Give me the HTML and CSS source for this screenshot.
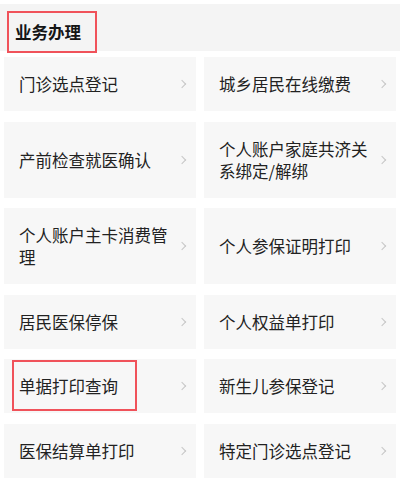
FILE: index.html
```html
<!DOCTYPE html>
<html lang="zh-CN">
<head>
<meta charset="utf-8">
<link rel="stylesheet" href="styles.css">
</head>
<body>
<div class="page">
  <div class="section-head">
    <span class="section-title">业务办理</span>
    <span class="mark mark-head"></span>
  </div>
  <div class="grid">
    <div class="card"><span class="label">门诊选点登记</span><span class="chev"></span></div>
    <div class="card"><span class="label">城乡居民在线缴费</span><span class="chev"></span></div>
    <div class="card"><span class="label">产前检查就医确认</span><span class="chev"></span></div>
    <div class="card"><span class="label">个人账户家庭共济关系绑定/解绑</span><span class="chev"></span></div>
    <div class="card"><span class="label">个人账户主卡消费管理</span><span class="chev"></span></div>
    <div class="card"><span class="label">个人参保证明打印</span><span class="chev"></span></div>
    <div class="card"><span class="label">居民医保停保</span><span class="chev"></span></div>
    <div class="card"><span class="label">个人权益单打印</span><span class="chev"></span></div>
    <div class="card card-marked"><span class="label">单据打印查询</span><span class="chev"></span><span class="mark mark-card"></span></div>
    <div class="card"><span class="label">新生儿参保登记</span><span class="chev"></span></div>
    <div class="card"><span class="label">医保结算单打印</span><span class="chev"></span></div>
    <div class="card"><span class="label">特定门诊选点登记</span><span class="chev"></span></div>
  </div>
</div>
</body>
</html>
```

FILE: styles.css
```css
* { box-sizing: border-box; }
html, body {
  margin: 0;
  padding: 0;
  background: #ffffff;
}
body {
  font-family: "Noto Sans CJK SC", "Noto Sans", sans-serif;
  color: #1f1f1f;
  overflow: hidden;
}
.page {
  width: 400px;
  height: 483px;
  padding-top: 4px;
}
.section-head {
  position: relative;
  height: 47px;
  background: #f4f4f4;
  display: flex;
  align-items: center;
  padding-left: 15px;
}
.section-title {
  font-size: 16.5px;
  font-weight: 700;
  line-height: 22px;
  margin-top: 9px;
  color: #151515;
}
.mark {
  position: absolute;
  border: 2px solid #f0525a;
  pointer-events: none;
}
.mark-head {
  left: 7px;
  top: 7px;
  width: 90px;
  height: 42px;
}
.grid {
  display: grid;
  grid-template-columns: 1fr 1fr;
  column-gap: 8px;
  row-gap: 10.5px;
  padding: 6px 4px 0 4px;
}
.card {
  position: relative;
  background: #f7f7f7;
  min-height: 54px;
  display: flex;
  align-items: center;
  padding: 16px 10px 16px 15px;
}
.label {
  flex: 1;
  font-size: 16.5px;
  line-height: 22px;
  padding-right: 8px;
  color: #222222;
}
.chev {
  width: 6px;
  height: 6px;
  border-top: 1.3px solid #c6c6c6;
  border-right: 1.3px solid #c6c6c6;
  transform: rotate(45deg);
  margin-right: 1px;
  flex: none;
}
.mark-card {
  left: 8px;
  top: 1px;
  width: 125px;
  height: 51px;
}
```
